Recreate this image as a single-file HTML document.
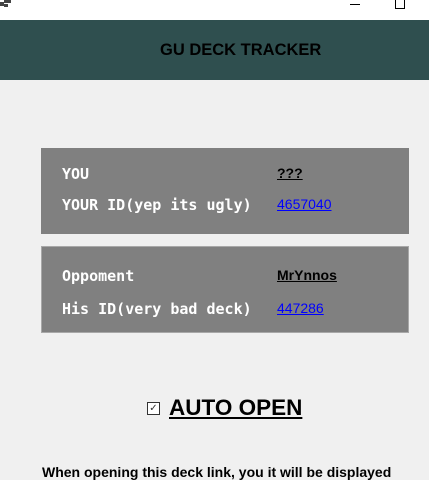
<!DOCTYPE html>
<html><head><style>
body{margin:0;width:429px;height:471px;overflow:hidden;background:#f0f0f0;font-family:"Liberation Sans",sans-serif;position:relative}
.top{position:absolute;left:0;top:0;width:429px;height:20px;background:#fff}
.hdr{position:absolute;left:0;top:20px;width:429px;height:60px;background:#2f4f4f}
.hdr span{position:absolute;left:160px;top:21px;font-weight:bold;font-size:16.5px;color:#000}
.p{position:absolute;left:41px;width:368px;background:#808080;box-sizing:border-box}
.l{position:absolute;left:21px;color:#fff;font:bold 15px "DejaVu Sans Mono","Liberation Mono",monospace;letter-spacing:0}
.v{position:absolute;left:236px;font-size:14px}
a{color:#00f;text-decoration:underline}
</style></head><body>
<div class="top">
<div style="position:absolute;left:0;top:2px;width:4px;height:4px;background:#444"></div>
<div style="position:absolute;left:4px;top:0;width:7px;height:3px;background:#444"></div>
<div style="position:absolute;left:4px;top:4px;width:4px;height:3px;background:#444"></div>
<div style="position:absolute;left:350px;top:4px;width:10px;height:1px;background:#000"></div>
<div style="position:absolute;left:395px;top:-1px;width:8px;height:8px;border:1px solid #000"></div>
</div>
<div class="hdr"><span>GU DECK TRACKER</span></div>
<div class="p" style="top:148px;height:86px">
<div class="l" style="top:17px">YOU</div>
<div class="v" style="top:17px;font-weight:bold;text-decoration:underline;color:#000">???</div>
<div class="l" style="top:48px">YOUR ID(yep its ugly)</div>
<div class="v" style="top:48px"><a>4657040</a></div>
</div>
<div class="p" style="top:246px;height:87px;border:1px solid #a8a8a8">
<div class="l" style="top:20px;left:20px">Oppoment</div>
<div class="v" style="top:20px;left:235px;font-weight:bold;text-decoration:underline;color:#000">MrYnnos</div>
<div class="l" style="top:53px;left:20px">His ID(very bad deck)</div>
<div class="v" style="top:53px;left:235px"><a>447286</a></div>
</div>
<div style="position:absolute;left:147px;top:402px;width:11px;height:11px;border:1px solid #333;background:#fff;font-size:10px;line-height:11px;text-align:center;color:#333">✓</div>
<div style="position:absolute;left:169px;top:395px;font-weight:bold;font-size:22.5px;text-decoration:underline;color:#000">AUTO OPEN</div>
<div style="position:absolute;left:42px;top:464px;font-weight:bold;font-size:14px;color:#000;white-space:nowrap">When opening this deck link, you it will be displayed</div>
</body></html>
